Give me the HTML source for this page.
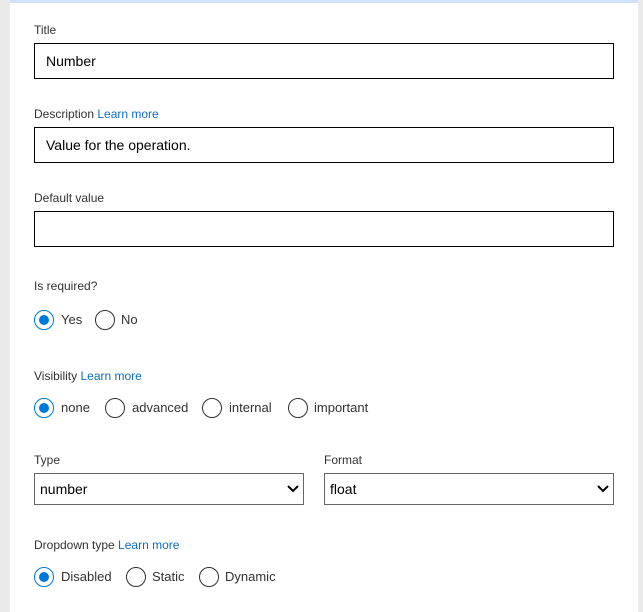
<!DOCTYPE html>
<html><head><meta charset="utf-8"><style>
body{margin:0;width:643px;height:612px;background:#eaeaea;position:relative;overflow:hidden;font-family:"Segoe UI","Liberation Sans",sans-serif;color:#323130}
.panel{position:absolute;left:10px;top:0;width:628px;height:612px;background:#fff;border-top:3px solid #cfe2fd;box-sizing:border-box}
.l{position:absolute;font-size:12px;line-height:14px;left:34px}
.l a{color:#0f6cbd;text-decoration:none}
.in{position:absolute;left:34px;width:580px;height:36px;border:1px solid #000;box-sizing:border-box;font-size:14px;line-height:34px;padding-left:11px;color:#000}
.sel{position:absolute;top:473px;height:32px;border:1px solid #666;box-sizing:border-box;font-size:14px;line-height:30px;padding-left:5px;color:#000}
.sel svg{position:absolute;right:4px;top:10px}
.r{position:absolute;width:20px;height:20px;border:1px solid #323130;border-radius:50%;box-sizing:border-box}
.r.on{border-color:#0078d4}
.r.on::after{content:"";position:absolute;left:4px;top:4px;width:10px;height:10px;border-radius:50%;background:#0078d4}
.t{position:absolute;font-size:13px;line-height:16px;color:#323130}
</style></head><body>
<div class="panel"></div>
<div class="l" style="top:23px">Title</div>
<div class="in" style="top:43px">Number</div>
<div class="l" style="top:107px">Description <a>Learn more</a></div>
<div class="in" style="top:127px">Value for the operation.</div>
<div class="l" style="top:191px">Default value</div>
<div class="in" style="top:211px"></div>
<div class="l" style="top:279px">Is required?</div>
<div class="r on" style="left:34px;top:310px"></div><div class="t" style="left:61px;top:312px">Yes</div>
<div class="r" style="left:95px;top:310px"></div><div class="t" style="left:121px;top:312px">No</div>
<div class="l" style="top:369px">Visibility <a>Learn more</a></div>
<div class="r on" style="left:34px;top:398px"></div><div class="t" style="left:61px;top:400px">none</div>
<div class="r" style="left:105px;top:398px"></div><div class="t" style="left:132px;top:400px">advanced</div>
<div class="r" style="left:202px;top:398px"></div><div class="t" style="left:229px;top:400px">internal</div>
<div class="r" style="left:288px;top:398px"></div><div class="t" style="left:314px;top:400px">important</div>
<div class="l" style="top:453px">Type</div>
<div class="l" style="top:453px;left:324px">Format</div>
<div class="sel" style="left:34px;width:270px">number<svg width="12" height="10" viewBox="0 0 12 10"><path d="M1 2l5 5 5-5" stroke="#000" stroke-width="2" fill="none"/></svg></div>
<div class="sel" style="left:324px;width:290px">float<svg width="12" height="10" viewBox="0 0 12 10"><path d="M1 2l5 5 5-5" stroke="#000" stroke-width="2" fill="none"/></svg></div>
<div class="l" style="top:538px">Dropdown type <a>Learn more</a></div>
<div class="r on" style="left:34px;top:567px"></div><div class="t" style="left:61px;top:569px">Disabled</div>
<div class="r" style="left:126px;top:567px"></div><div class="t" style="left:152px;top:569px">Static</div>
<div class="r" style="left:199px;top:567px"></div><div class="t" style="left:225px;top:569px">Dynamic</div>
</body></html>
